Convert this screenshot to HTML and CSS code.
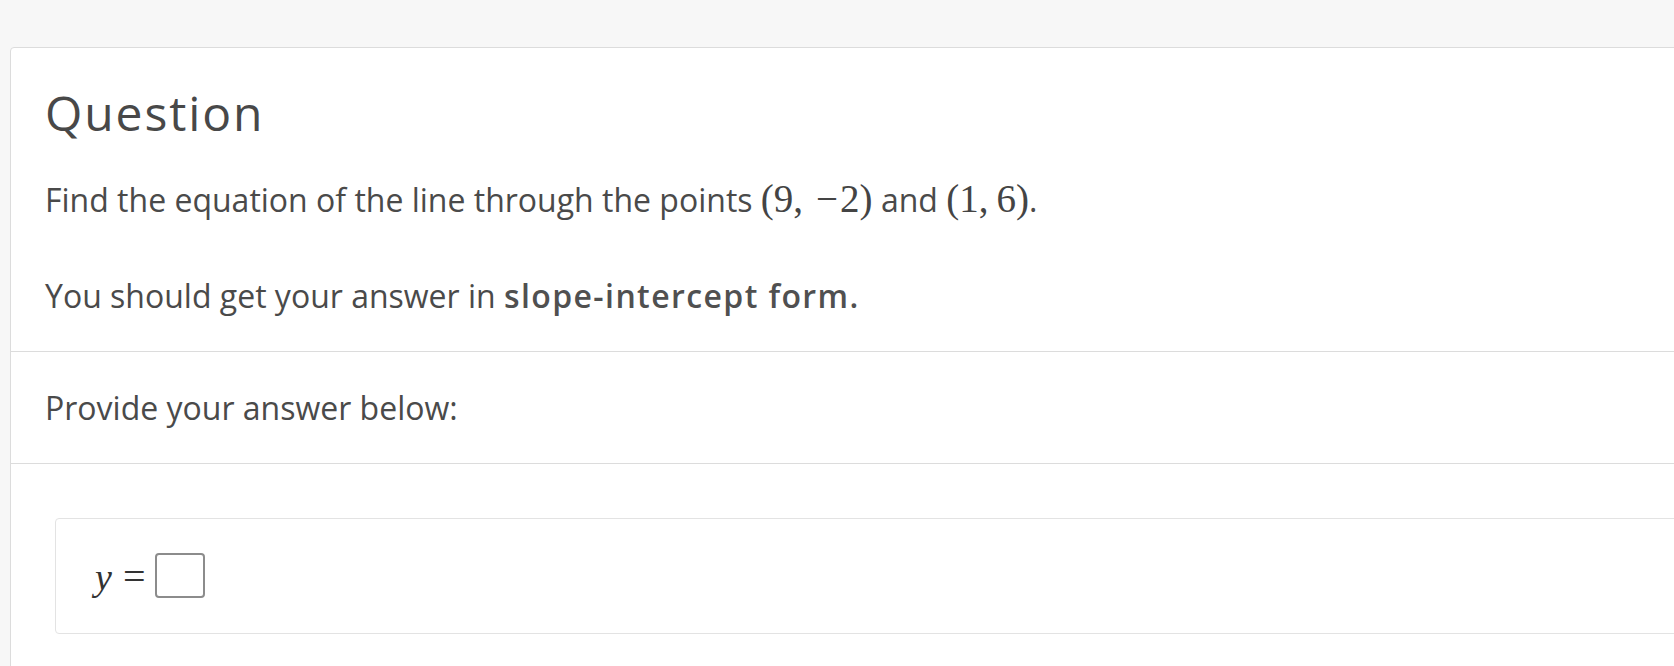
FILE: index.html
```html
<!DOCTYPE html>
<html lang="en">
<head>
<meta charset="utf-8">
<title>Question</title>
<link rel="stylesheet" href="styles.css">
</head>
<body>
<div class="card">
  <section class="sec sec-question">
    <h1 class="title">Question</h1>
    <p class="para">Find the equation of the line through the points <span class="math">(9,<span class="sp"></span><span class="minus">−</span>2)</span> and <span class="math">(1,<span class="sp"></span>6)</span>.</p>
    <p class="para para-gap">You should get your answer in <strong class="strong">slope-intercept form.</strong></p>
  </section>
  <section class="sec sec-prompt">
    <p class="para">Provide your answer below:</p>
  </section>
  <section class="sec-answer">
    <div class="answer-box">
      <span class="var">y</span>
      <span class="eq">=</span>
      <span class="input"></span>
    </div>
  </section>
</div>
</body>
</html>
```
FILE: styles.css
```css
html, body {
  margin: 0;
  padding: 0;
}
body {
  background: #f7f7f7;
  overflow: hidden;
  font-family: "Open Sans", "Noto Sans", sans-serif;
  color: #4a4a4a;
}
.card {
  margin: 47px 0 0 10px;
  width: calc(100% + 40px);
  min-height: 700px;
  background: #fff;
  border: 1px solid #dcdcdc;
  border-radius: 4px;
}
.sec {
  padding: 32px 34px 31px;
}
.sec-prompt,
.sec-answer {
  border-top: 1px solid #dcdcdc;
}
.sec-prompt {
  padding-bottom: 31px;
}
.title {
  margin: 0 0 31px;
  font-size: 48px;
  font-weight: 400;
  line-height: normal;
  letter-spacing: 1.9px;
  color: #484848;
}
.para {
  margin: 0;
  font-size: 32px;
  line-height: 48px;
}
.para-gap {
  margin-top: 48px;
}
.strong {
  font-weight: 600;
  letter-spacing: 1.4px;
  color: #505050;
}
.math {
  font-family: "Liberation Serif", "Times New Roman", serif;
  font-size: 39px;
  line-height: 1;
  color: #444;
}
.sp {
  display: inline-block;
  width: 8px;
}
.minus {
  padding: 0 2px 0 5px;
}
.sec-answer {
  padding: 53.5px 0 40px 44px;
}
.answer-box {
  display: flex;
  align-items: center;
  padding: 34.5px 0 34.5px 39px;
  border: 1px solid #e3e3e3;
  border-radius: 4px;
  font-family: "Liberation Serif", "Times New Roman", serif;
  font-size: 38px;
  line-height: 1;
  color: #333;
}
.var {
  font-style: italic;
  margin-top: 2px;
}
.eq {
  margin: 2px 10px 0 11px;
  font-size: 40px;
}
.input {
  width: 50px;
  height: 45px;
  box-sizing: border-box;
  border: 2px solid #8c8c8c;
  border-radius: 4px;
}
```
